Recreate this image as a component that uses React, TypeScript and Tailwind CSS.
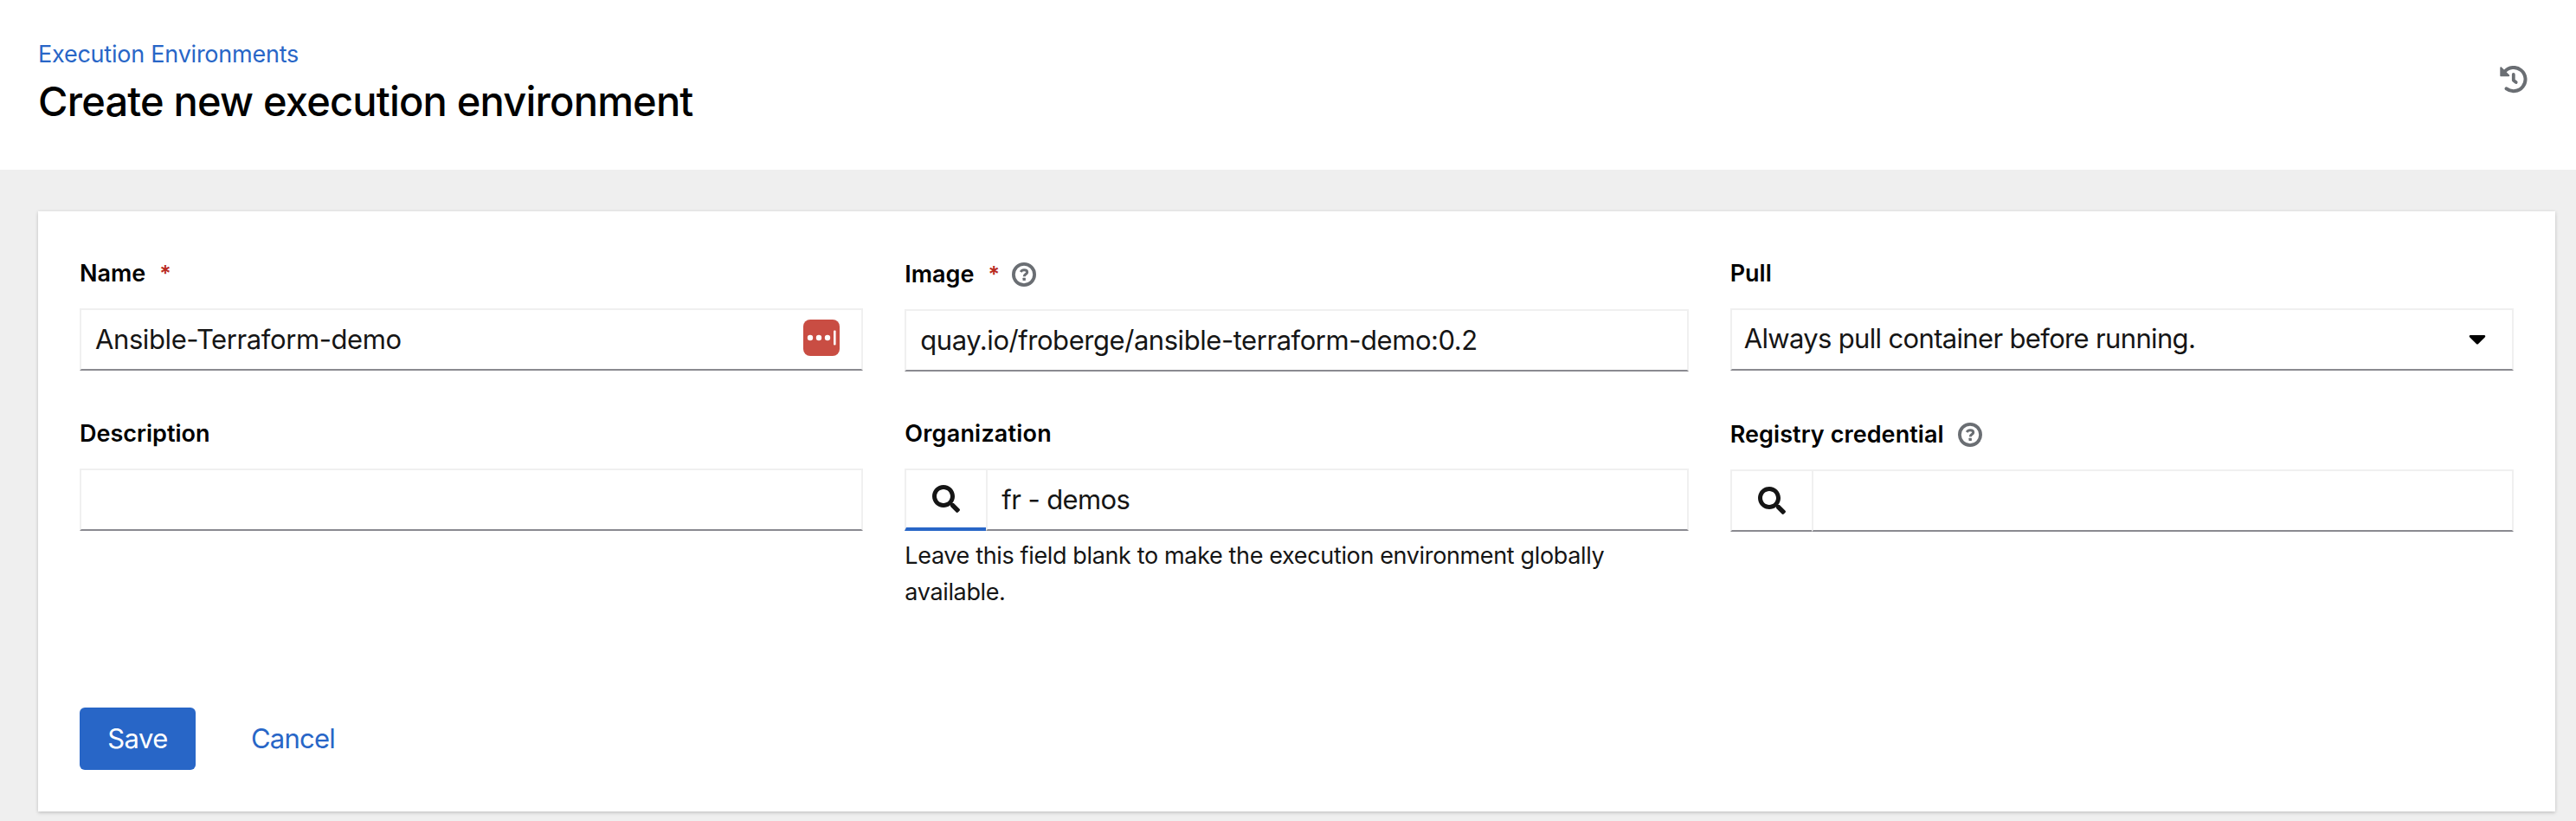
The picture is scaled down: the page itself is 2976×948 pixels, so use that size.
import { ReactNode } from "react";
import { FaCaretDown, FaSearch } from "react-icons/fa";

function HelpIcon() {
  return (
    <svg viewBox="0 0 28 28" className="size-7 shrink-0" fill="none">
      <circle cx="14" cy="14" r="12.1" stroke="#6a6e73" strokeWidth="3.8" />
      <path d="M10.2 10.9c.8-1.4 2-2.2 3.9-2.2 2 0 3.6 1.1 3.6 2.7 0 2.2-3.4 2.2-3.4 4.9" stroke="#6a6e73" strokeWidth="3" />
      <rect x="12.5" y="17.8" width="3.4" height="3.2" rx="0.4" fill="#6a6e73" />
    </svg>
  );
}

function HistoryIcon() {
  return (
    <svg viewBox="0 0 32 32" className="mt-[76px] size-8 shrink-0" fill="none">
      <path d="M7.6 26.3A13.6 13.6 0 1 0 5.4 6.9" stroke="#6a6e73" strokeWidth="4" strokeLinecap="round" />
      <path d="M.3 2.2c0-.9 1-1.2 1.6-.6l9 9c.7.7.3 1.6-.6 1.6H1.3c-.6 0-1-.4-1-1Z" fill="#6a6e73" />
      <path d="M15.8 10v6.8l2.9 2.2" stroke="#6a6e73" strokeWidth="3.8" strokeLinecap="round" strokeLinejoin="round" />
    </svg>
  );
}

function Label({ text, tracking = "tracking-normal", required, help }: { text: string; tracking?: string; required?: boolean; help?: boolean }) {
  return (
    <div className="flex h-8 items-center">
      <span className={"text-[27px] leading-[42px] font-semibold text-black whitespace-nowrap " + tracking}>{text}</span>
      {required && <span className="ml-4 w-3 text-[25px] leading-8 font-semibold text-[#b92b1f]">*</span>}
      {help && <span className="ml-4"><HelpIcon /></span>}
    </div>
  );
}

function Box({ children, className = "" }: { children?: ReactNode; className?: string }) {
  return (
    <div className={"flex h-[72px] items-center border-2 border-[#f0f0f0] border-b-[#8a8a90] bg-white text-[31px] leading-[48px] text-[#151515] whitespace-nowrap " + className}>
      {children}
    </div>
  );
}

export default function App() {
  return (
    <div className="flex h-[948px] w-[2976px] flex-col overflow-hidden bg-[#efefef] font-['Inter',sans-serif] text-[#151515]">
      <header className="flex h-[196px] shrink-0 items-start justify-between bg-white pr-14 pl-11">
        <div className="pt-[42px]">
          <a className="block h-[42px] text-[27px] leading-[42px] tracking-[-0.23px] text-[#2866c7]">Execution Environments</a>
          <h1 className="h-[62px] pt-0.5 text-[47px] leading-[62px] font-medium tracking-[-0.8px] text-black">Create new execution environment</h1>
        </div>
        <HistoryIcon />
      </header>
      <main className="pt-12 pr-6 pl-11">
        <section className="h-[693px] bg-white px-12 pt-14 shadow-[0_2px_4px_rgba(3,3,3,0.14),0_0_4px_rgba(3,3,3,0.08)]">
          <div className="grid grid-cols-3 gap-x-12">
            <div>
              <Label text="Name" required />
              <Box className="mt-6 justify-between pr-[25px] pl-4">
                <span className="tracking-[-0.4px]">Ansible-Terraform-demo</span>
                <svg viewBox="0 0 42 42" className="mb-1 size-[42px]">
                  <rect width="42" height="42" rx="8" fill="#c94d43" />
                  <circle cx="8" cy="21" r="3.2" fill="#fff" />
                  <circle cx="18" cy="21" r="3.2" fill="#fff" />
                  <circle cx="28" cy="21" r="3.2" fill="#fff" />
                  <rect x="35" y="12.5" width="2.6" height="17" rx="1" fill="#fff" />
                </svg>
              </Box>
            </div>
            <div className="pt-px">
              <Label text="Image" required help />
              <Box className="mt-6 pl-4">
                <span className="tracking-[-0.45px]">quay.io/froberge/ansible-terraform-demo:0.2</span>
              </Box>
            </div>
            <div>
              <Label text="Pull" />
              <Box className="mt-6 justify-between pr-6 pb-0.5 pl-3.5">
                <span className="tracking-[-0.66px]">Always pull container before running.</span>
                <FaCaretDown className="size-8 text-black" />
              </Box>
            </div>
          </div>
          <div className="mt-14 grid h-[332px] grid-cols-3 gap-x-12">
            <div>
              <Label text="Description" />
              <Box className="mt-6" />
            </div>
            <div>
              <Label text="Organization" tracking="tracking-[0.2px]" />
              <div className="mt-6 flex">
                <Box className="w-24 justify-center border-b-4 border-b-[#2866c7]"><FaSearch className="size-8" /></Box>
                <Box className="-ml-0.5 flex-1 pl-4"><span className="tracking-[-0.6px]">fr - demos</span></Box>
              </div>
              <p className="mt-2 text-[27px] leading-[42px] tracking-[-0.36px]">Leave this field blank to make the execution environment globally<br />available.</p>
            </div>
            <div className="pt-px">
              <Label text="Registry credential" tracking="tracking-[0.07px]" help />
              <div className="mt-6 flex">
                <Box className="w-24 justify-center"><FaSearch className="size-8" /></Box>
                <Box className="-ml-0.5 flex-1" />
              </div>
            </div>
          </div>
          <div className="flex text-[31px] leading-[70px]">
            <button className="h-[72px] w-[134px] rounded-md bg-[#2866c7] tracking-[-0.5px] text-white">Save</button>
            <button className="ml-16 h-[72px] tracking-[-0.8px] text-[#2866c7]">Cancel</button>
          </div>
        </section>
      </main>
    </div>
  );
}
